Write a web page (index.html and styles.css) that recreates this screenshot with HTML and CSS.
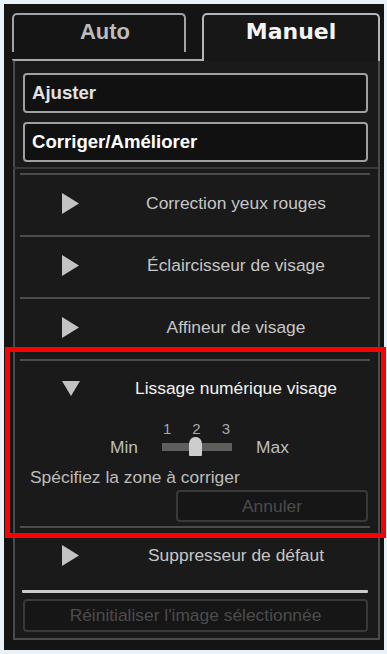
FILE: index.html
```html
<!DOCTYPE html>
<html lang="fr">
<head>
<meta charset="utf-8">
<title>Manuel</title>
<link rel="stylesheet" href="styles.css">
</head>
<body>
<div class="frame">
  <div class="tabs">
    <div class="tab-left"><div class="tab tab-auto">Auto</div></div>
    <div class="tab tab-manuel">Manuel</div>
  </div>
  <div class="panel">
    <div class="btn-cat">Ajuster</div>
    <div class="btn-cat btn-cat-active">Corriger/Améliorer</div>
    <div class="list-top"></div>
    <div class="sep sep-first"></div>
    <div class="row">
      <svg class="tri" width="17" height="21" viewBox="0 0 17 21"><polygon points="0,0 17,10.5 0,21"/></svg>
      <span class="label">Correction yeux rouges</span>
    </div>
    <div class="sep"></div>
    <div class="row">
      <svg class="tri" width="17" height="21" viewBox="0 0 17 21"><polygon points="0,0 17,10.5 0,21"/></svg>
      <span class="label">Éclaircisseur de visage</span>
    </div>
    <div class="sep"></div>
    <div class="row">
      <svg class="tri" width="17" height="21" viewBox="0 0 17 21"><polygon points="0,0 17,10.5 0,21"/></svg>
      <span class="label">Affineur de visage</span>
    </div>
    <div class="sep"></div>
    <div class="section">
      <div class="row row-open">
        <svg class="tri tri-down" width="18" height="15" viewBox="0 0 18 15"><polygon points="0,0 18,0 9,15"/></svg>
        <span class="label label-open">Lissage numérique visage</span>
      </div>
      <div class="slider-row">
        <span class="minmax">Min</span>
        <div class="slider">
          <div class="ticks"><span>1</span><span>2</span><span>3</span></div>
          <div class="track-wrap">
            <div class="track"></div>
            <div class="knob"></div>
          </div>
        </div>
        <span class="minmax">Max</span>
      </div>
      <div class="hint">Spécifiez la zone à corriger</div>
      <div class="btn-disabled btn-annuler">Annuler</div>
    </div>
    <div class="sep"></div>
    <div class="row row-last">
      <svg class="tri" width="17" height="21" viewBox="0 0 17 21"><polygon points="0,0 17,10.5 0,21"/></svg>
      <span class="label">Suppresseur de défaut</span>
    </div>
    <div class="bright-line"></div>
    <div class="btn-disabled btn-reset">Réinitialiser l'image sélectionnée</div>
  </div>
</div>
<div class="highlight"></div>
</body>
</html>
```
FILE: styles.css
```css
html, body {
  margin: 0;
  padding: 0;
}
body {
  background: #e9f1f9;
  padding: 4px 3px 4px 4px;
  width: 387px;
  height: 654px;
  box-sizing: border-box;
  font-family: "Liberation Sans", Arial, sans-serif;
  overflow: hidden;
}
.frame {
  width: 380px;
  height: 646px;
  box-sizing: border-box;
  background: #141414;
  padding: 9px 0 10px 8px;
}
.tabs {
  display: flex;
  height: 48px;
}
.tab-left {
  width: 190px;
  height: 48px;
  box-sizing: border-box;
  border-bottom: 2px solid #a9a9a9;
  border-bottom-left-radius: 2px;
}
.tab {
  box-sizing: border-box;
  font-size: 22px;
  line-height: 26px;
  text-align: center;
  padding-top: 4px;
  font-weight: bold;
}
.tab-auto {
  width: 174px;
  height: 39px;
  border: 2px solid #a3a3a3;
  border-bottom: none;
  border-radius: 5px 5px 0 0;
  color: #bcbcbc;
  font-family: "Liberation Sans", Arial, sans-serif;
  padding-left: 12px;
}
.tab-manuel {
  width: 178px;
  height: 48px;
  border: 2px solid #b5b5b5;
  border-bottom: none;
  border-radius: 5px 5px 0 0;
  color: #f4f4f4;
  font-family: "DejaVu Sans", sans-serif;
  background: #171717;
}
.panel {
  margin-left: 1px;
  width: 367px;
  height: 579px;
  box-sizing: border-box;
  border: 2px solid #4a4a4a;
  border-top: none;
  background: #1a1a1a;
  padding: 12px 0 6px 0;
  display: flex;
  flex-direction: column;
}
.btn-cat {
  margin: 0 10px 0 8px;
  height: 40px;
  box-sizing: border-box;
  border: 2px solid #a0a0a0;
  border-radius: 4px;
  background: #111111;
  padding-left: 7px;
  line-height: 36px;
  font-weight: bold;
  font-size: 18.6px;
  color: #e2e2e2;
  flex: none;
}
.btn-cat-active {
  margin-top: 9px;
  color: #ffffff;
}
.list-top {
  margin: 5px 0 0 -2px;
  height: 2px;
  background: #3a3a3a;
  flex: none;
}
.sep {
  margin: 0 8px 0 5px;
  height: 2px;
  background: #4c4c4c;
  flex: none;
}
.sep-first {
  margin-top: 4px;
}
.row {
  display: grid;
  grid-template-columns: 79px 1fr;
  align-items: center;
  height: 60px;
  box-sizing: border-box;
  padding-bottom: 4px;
  flex: none;
}
.row-open {
  height: 58px;
}
.row-last {
  height: 58px;
}
.tri {
  margin-left: 47px;
  fill: #c3c3c3;
  display: block;
}
.label {
  text-align: center;
  font-size: 17.4px;
  color: #c6c6c6;
  white-space: nowrap;
}
.label-open {
  color: #f2f2f2;
}
.section {
  display: flex;
  flex-direction: column;
  height: 165px;
  flex: none;
}
.slider-row {
  margin-top: 2px;
  height: 36px;
  display: flex;
  align-items: flex-end;
  padding-left: 95px;
}
.minmax {
  font-size: 17.4px;
  line-height: 20px;
  color: #bdbdbd;
}
.slider {
  width: 70px;
  margin: 0 24px;
}
.ticks {
  display: flex;
  justify-content: space-between;
  padding: 0 2px 0 1px;
  height: 16px;
  font-size: 15px;
  line-height: 16px;
  color: #a9a9a9;
}
.track-wrap {
  position: relative;
  height: 20px;
}
.track {
  position: relative;
  top: 6px;
  height: 8px;
  background: #5e5e5e;
}
.knob {
  position: absolute;
  left: 27px;
  top: 0;
  width: 13px;
  height: 19px;
  background: #cdcdcd;
  border-radius: 6px 6px 1px 1px / 7px 7px 1px 1px;
}
.hint {
  margin-top: 10px;
  height: 20px;
  line-height: 20px;
  padding-left: 15px;
  font-size: 17.4px;
  color: #bdbdbd;
}
.btn-disabled {
  box-sizing: border-box;
  border: 2px solid #393939;
  border-radius: 4px;
  background: #161616;
  color: #4c4c4c;
  font-size: 17.4px;
  text-align: center;
  flex: none;
  white-space: nowrap;
}
.btn-annuler {
  margin: 3px 10px 0 auto;
  width: 192px;
  height: 32px;
  line-height: 28px;
}
.bright-line {
  margin: 4px 10px 0 7px;
  height: 3px;
  background: #cbcbcb;
  border-radius: 1px;
  flex: none;
}
.btn-reset {
  margin: 6px 10px 0 8px;
  height: 33px;
  line-height: 29px;
}
.highlight {
  position: absolute;
  left: 5px;
  top: 347px;
  width: 381px;
  height: 191px;
  box-sizing: border-box;
  border: 5px solid #ff0000;
}
```
